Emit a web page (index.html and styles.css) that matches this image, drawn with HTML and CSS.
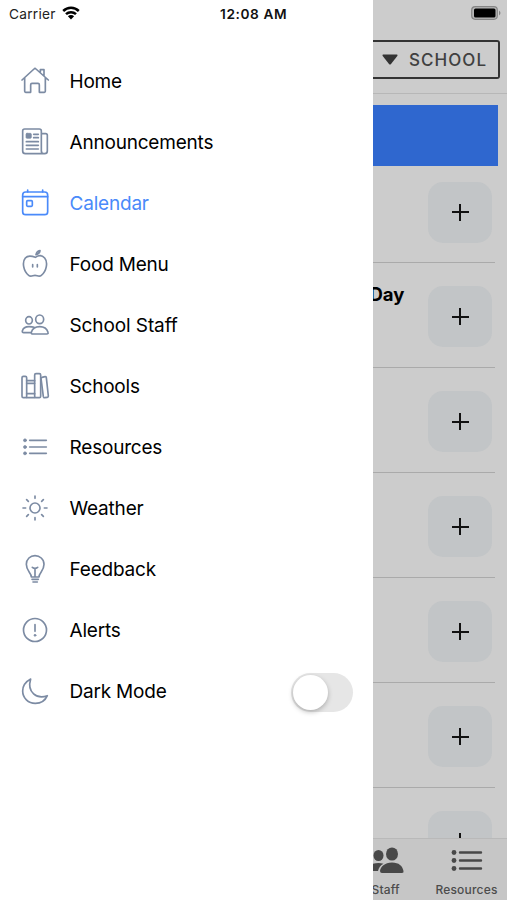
FILE: index.html
```html
<!DOCTYPE html>
<html lang="en">
<head>
<meta charset="utf-8">
<meta name="viewport" content="width=device-width">
<title>Calendar</title>
<link rel="stylesheet" href="styles.css">
</head>
<body>
<div class="app">
  <aside class="drawer">
    <header class="status">
      <span class="carrier">Carrier</span>
      <svg class="wifi" viewBox="0 0 18 14"><path d="M1.2 5a11.2 11.2 0 0 1 15.6 0M4 8.2a7.2 7.2 0 0 1 10 0" fill="none" stroke="#000" stroke-width="2.5"/><path d="M5.900 10.200a4.400 4.400 0 0 1 6.200 0L9 13.400z"/></svg>
      <span class="time">12:08 AM</span>
    </header>
    <nav class="menu">
      <a class="item"><svg class="icon" viewBox="0 0 84 84"><path d="M11 32V73q0 3 3 3H29V53q0-4 4-4H51q4 0 4 4V76H70q3 0 3-3V32M3 39L39 6q3-3 6 0L82 39M58 16V8H69V27"/></svg><span class="label">Home</span></a>
      <a class="item"><svg class="icon" viewBox="0 0 84 84"><path d="M61 70V9q0-6-6-6H11Q5 3 5 9V69q0 8 8 8H71q8 0 8-8V22q0-5-5-5H62M61 68q0 9 8 9M38 19H52M38 29H52M16 41H52M16 52H52M16 63H52"/><rect class="solid" x="15" y="16" width="16" height="15" rx="3"/></svg><span class="label">Announcements</span></a>
      <a class="item active"><svg class="icon" viewBox="0 0 84 84"><rect x="5" y="9" width="75" height="68" rx="9"/><path d="M5 23H80M20 3V9M65 3V9"/><rect x="17" y="35" width="17" height="17" rx="3"/></svg><span class="label">Calendar</span></a>
      <a class="item"><svg class="icon" viewBox="0 0 84 84"><path d="M43 22C54 15 64 16 71 24C82 37 76 65 61 76C54 82 49 76 42 76S30 82 23 76C8 65 2 37 13 24C20 16 31 17 43 22ZM45 14Q47 4 57 2Q56 11 45 14ZM35 44V51M49 44V51"/></svg><span class="label">Food Menu</span></a>
      <a class="item"><svg class="icon" viewBox="0 0 84 84"><ellipse cx="56" cy="25" rx="12" ry="13"/><ellipse cx="24" cy="28" rx="10" ry="11"/><path d="M56 47C43 47 34 54 31 64Q30 69 36 69H77Q83 69 81 64C78 54 69 47 56 47ZM39 49C34 47 30 47 24 47C14 47 6 52 4 60Q3 65 8 65H29"/></svg><span class="label staff">School Staff</span></a>
      <a class="item"><svg class="icon" viewBox="0 0 84 84"><rect x="3" y="13" width="14" height="64" rx="4"/><path d="M17 26H41M17 34H41M17 65H41M17 77H41"/><rect x="41" y="5" width="18" height="72" rx="4"/><path d="M63 16L72 14Q75 13 76 17L82 72Q82 76 79 76L71 77Q68 78 67 74L60 19Q60 16 63 16Z"/></svg><span class="label">Schools</span></a>
      <a class="item"><svg class="icon" viewBox="0 0 84 84"><path d="M26 22H76M26 42H76M26 61H76"/><g class="solid"><circle cx="12" cy="22" r="4.500"/><circle cx="12" cy="42" r="4.500"/><circle cx="12" cy="61" r="4.500"/></g></svg><span class="label">Resources</span></a>
      <a class="item"><svg class="icon" viewBox="0 0 84 84"><circle cx="42" cy="42" r="15"/><path d="M42 6V13M42 71V78M6 42H14M70 42H78M17 17L22 22M62 62L67 67M17 67L22 62M62 22L67 17"/></svg><span class="label">Weather</span></a>
      <a class="item"><svg class="icon" viewBox="0 0 84 84"><path d="M31 66C31 53 16 49 16 28C16 12 28 2 42 2S69 12 69 28C69 49 54 53 54 66ZM42 40V64M34 37Q42 43 50 37M33 73H52M36 81H49"/></svg><span class="label">Feedback</span></a>
      <a class="item"><svg class="icon" viewBox="0 0 84 84"><circle cx="42" cy="42" r="34.500"/><path d="M42 26V46"/><circle class="solid" cx="42" cy="58" r="3"/></svg><span class="label">Alerts</span></a>
      <a class="item"><svg class="icon" viewBox="0 0 84 84"><path d="M29 6C18 12 5 24 5 42C5 63 22 79 43 79C60 79 73 70 79 56C48 68 17 46 29 6Z"/></svg><span class="label">Dark Mode</span><span class="toggle"><span class="knob"></span></span></a>
    </nav>
  </aside>
  <main class="page">
    <div class="battery-row"><svg class="battery" viewBox="0 0 31 14"><rect x=".7" y=".7" width="25.600" height="12.600" rx="3.500" fill="#b8b8b8" stroke="#858585" stroke-width="1.200"/><rect x="3" y="2.500" width="21.500" height="9" rx="1.500"/><path d="M28 4.500q3 2.500 0 5z" fill="#858585"/></svg></div>
    <div class="toolbar"><button class="filter"><svg class="caret" viewBox="0 0 16 11"><path d="M1 .5H15Q16 .8 15.300 2L9 10Q8 11 7 10L.7 2Q0 .8 1 .5Z"/></svg><span>SCHOOL</span></button></div>
    <div class="banner"></div>
    <section class="events">
      <div class="event"><button class="add"></button></div>
      <div class="event"><strong class="title">Day</strong><button class="add"></button></div>
      <div class="event"><button class="add"></button></div>
      <div class="event"><button class="add"></button></div>
      <div class="event"><button class="add"></button></div>
      <div class="event"><button class="add"></button></div>
      <div class="event"><button class="add"></button></div>
    </section>
    <footer class="tabs">
      <div class="tab tab-staff"><svg viewBox="0 0 33 27"><ellipse cx="21" cy="7" rx="6" ry="6.600"/><path d="M21 15.500C13.500 15.500 9.500 20 9 24Q9 26 11 26H31Q33 26 32.500 24C31.500 19 28 15.500 21 15.500Z"/><ellipse cx="7.500" cy="8.500" rx="5" ry="5.500"/><path d="M7.500 16C2 16-2 18-3 22Q-3 24-1 24H7Q8 19 12.500 16.700Q10 16 7.500 16Z"/></svg><span>Staff</span></div>
      <div class="tab tab-resources"><svg viewBox="0 0 33 27"><path d="M10 5.500H31M10 13.500H31M10 21.500H31" fill="none" stroke="#484848" stroke-width="2.400" stroke-linecap="round"/><circle cx="4" cy="5.500" r="2.400"/><circle cx="4" cy="13.500" r="2.400"/><circle cx="4" cy="21.500" r="2.400"/></svg><span>Resources</span></div>
    </footer>
  </main>
</div>
</body>
</html>
```
FILE: styles.css
```css
* { box-sizing: border-box; }
body { margin: 0; font-family: Inter, "Liberation Sans", sans-serif; color: #000; }
button { font: inherit; color: inherit; margin: 0; padding: 0; }
.app { display: grid; grid-template-columns: 372.5px 1fr; height: 900px; overflow: hidden; background: #ccc; }
.drawer { background: #fff; }
.status { display: flex; align-items: center; height: 28px; padding-left: 9px; }
.carrier { width: 47px; font-size: 13.7px; letter-spacing: 0.25px; white-space: nowrap; color: #222; }
.wifi { width: 18px; height: 14px; margin: -2px 0 0 6px; }
.time { margin-left: 140px; font-size: 13.7px; font-weight: 600; letter-spacing: 0.6px; white-space: nowrap; color: #111; }
.menu { padding-top: 22.5px; }
.item { display: flex; align-items: center; height: 61px; padding: 0 19.5px 0 21px; }
.icon { width: 28px; height: 28px; margin-right: 20.5px; overflow: visible; fill: none; stroke: #7c8ba3; stroke-width: 5; stroke-linecap: round; stroke-linejoin: round; }
.icon .solid { fill: #7c8ba3; stroke-width: 2; }
.label { font-size: 19px; letter-spacing: -0.2px; white-space: nowrap; }
.label.staff { letter-spacing: -0.1px; }
.active { color: #4a8afa; }
.active .icon { stroke: #4a8afa; }
.toggle { width: 62px; height: 39px; margin: 2px 0 0 auto; padding: 2px; border-radius: 20px; background: #e6e6e6; }
.knob { display: block; width: 35px; height: 35px; border-radius: 50%; background: #fff; box-shadow: 0 2px 5px rgba(0,0,0,.25); }
.page { display: flex; flex-direction: column; min-width: 0; height: 900px; overflow: hidden; }
.battery-row { display: flex; justify-content: flex-end; height: 40px; padding: 6px 5px 0 0; flex: none; }
.battery { width: 31px; height: 14px; }
.toolbar { flex: none; height: 54px; padding-right: 7.5px; border-bottom: 1px solid #b7b7b7; }
.filter { display: flex; align-items: center; width: 100%; height: 39px; padding-left: 9.5px; border: 2px solid #333; border-left: 0; border-radius: 0 3px 3px 0; background: none; color: #404040; font-size: 17px; font-weight: 500; letter-spacing: 1.05px; }
.caret { width: 16px; height: 11px; margin-right: 11px; fill: #333; }
.banner { flex: none; height: 61px; margin: 11px 9px 0 0; background: #2f67cf; }
.events { flex: 1; min-height: 0; overflow: hidden; padding-right: 12px; }
.event { display: flex; justify-content: flex-end; height: 105px; padding: 23px 3px 0 0; border-bottom: 1.5px solid #aaa; }
.event:first-child { height: 97px; padding-top: 15.5px; }
.title { margin: -4px auto 0 -3px; font-size: 18.5px; line-height: 24px; font-weight: 700; }
.add { flex: none; display: grid; place-items: center; width: 64px; height: 61px; border: 0; border-radius: 15px; background: #c2c5c7; }
.add::before, .add::after { content: ""; grid-area: 1 / 1; width: 17px; height: 2px; background: #111; }
.add::after { width: 2px; height: 17px; }
.tabs { flex: none; display: flex; height: 62px; border-top: 1px solid #b9b9b9; background: #c6c6c6; color: #4c4c4c; font-size: 12px; font-weight: 500; letter-spacing: 0.2px; }
.tab { display: flex; flex-direction: column; align-items: center; padding-top: 8px; }
.tab svg { width: 33px; height: 27px; fill: #484848; }
.tab span { margin-top: 8px; line-height: 15px; white-space: nowrap; }
.tab-staff { width: 30px; align-items: flex-start; }
.tab-staff svg { margin-left: -2px; }
.tab-staff span { margin-left: -1px; }
.tab-resources { margin-left: 32px; width: 64px; }
```
